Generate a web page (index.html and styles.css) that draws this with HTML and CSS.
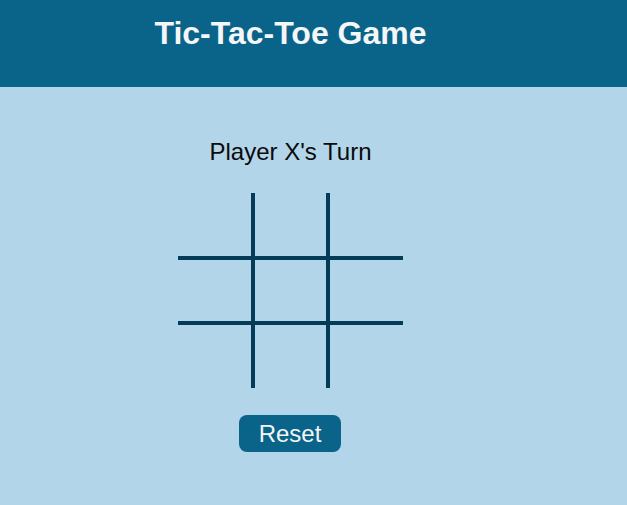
FILE: index.html
```html
<!DOCTYPE html>
<html lang="en">
<head>
<meta charset="utf-8">
<title>Tic-Tac-Toe Game</title>
<link rel="stylesheet" href="styles.css">
</head>
<body>
  <header class="header">
    <div class="inner">
      <h1 class="title">Tic-Tac-Toe Game</h1>
    </div>
  </header>
  <main class="inner main">
    <p class="status">Player X's Turn</p>
    <div class="board">
      <div class="cell"></div><div class="cell"></div><div class="cell"></div>
      <div class="cell"></div><div class="cell"></div><div class="cell"></div>
      <div class="cell"></div><div class="cell"></div><div class="cell"></div>
    </div>
    <button class="reset" type="button">Reset</button>
  </main>
</body>
</html>
```

FILE: styles.css
```css
html, body {
  margin: 0;
  padding: 0;
}
body {
  background: #b2d5ea;
  font-family: "Liberation Sans", Arial, sans-serif;
  min-height: 505px;
}
.inner {
  width: 581px;
  text-align: center;
}
.header {
  background: #0a6388;
  height: 87px;
  box-sizing: border-box;
  padding-top: 15px;
}
.title {
  margin: 0;
  font-size: 32px;
  font-weight: bold;
  color: #f4f6f8;
}
.main {
  display: flex;
  flex-direction: column;
  align-items: center;
}
.status {
  margin: 51px 0 0;
  font-size: 24px;
  color: #0a0a0a;
}
.board {
  margin-top: 27px;
  display: grid;
  grid-template-columns: repeat(3, 75px);
  grid-template-rows: repeat(3, 65px);
}
.cell {
  box-sizing: border-box;
  border: 2px solid #043b56;
}
.cell:nth-child(-n+3) { border-top: none; }
.cell:nth-child(n+7) { border-bottom: none; }
.cell:nth-child(3n+1) { border-left: none; }
.cell:nth-child(3n) { border-right: none; }
.reset {
  margin: 27px 1px 0 0;
  width: 102px;
  height: 37px;
  padding: 0;
  border: none;
  border-radius: 8px;
  background: #0a6388;
  color: #f4f6f8;
  font-family: "Liberation Sans", Arial, sans-serif;
  font-size: 24px;
  line-height: 37px;
}
```
